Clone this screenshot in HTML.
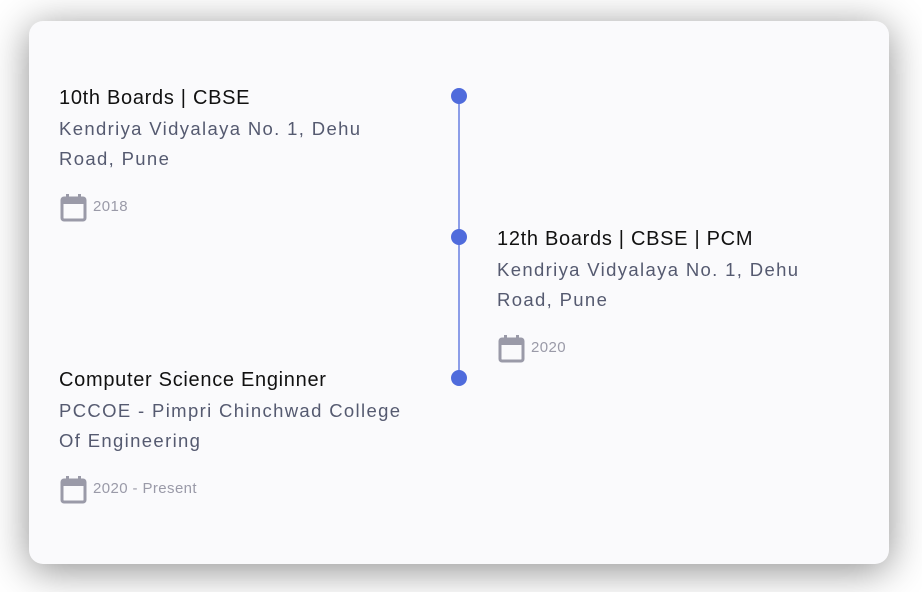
<!DOCTYPE html>
<html><head><style>
html,body{margin:0;padding:0;width:922px;height:592px;overflow:hidden;background:#fff;font-family:"Liberation Sans",sans-serif;}
.card{position:absolute;left:29px;top:21px;width:860px;height:543px;background:#fafafc;border-radius:14px;box-shadow:0 6px 40px rgba(0,0,0,.45);}
.line{position:absolute;left:458px;top:96px;width:2px;height:282px;background:#8c9de8;}
.dot{position:absolute;width:16px;height:16px;border-radius:50%;background:#4f6bdc;left:451px;}
.item{position:absolute;white-space:nowrap;}
.t{font-size:20px;color:#111;letter-spacing:0.7px;line-height:24px;height:24px}
.s{font-size:18.5px;color:#555a70;letter-spacing:1.35px;line-height:30px;margin-top:4px}
.d{position:absolute;top:112px;left:34px;font-size:15px;color:#9a9aa8;letter-spacing:0.4px;}
svg{position:absolute;left:1px;top:107px}
</style></head><body>
<div class="card"></div>
<div class="line"></div>
<div class="dot" style="top:88px"></div>
<div class="dot" style="top:229px"></div>
<div class="dot" style="top:370px"></div>

<div class="item" style="left:59px;top:86px">
<div class="t">10th Boards | CBSE</div>
<div class="s">Kendriya Vidyalaya No. 1, Dehu<br>Road, Pune</div>
<svg width="28" height="30" viewBox="0 0 28 30"><rect x="2" y="5" width="23" height="22" rx="2" fill="none" stroke="#9a9aa8" stroke-width="3"/><rect x="2" y="5" width="23" height="6" fill="#9a9aa8"/><rect x="6" y="1" width="3" height="6" fill="#9a9aa8"/><rect x="18" y="1" width="3" height="6" fill="#9a9aa8"/></svg>
<div class="d">2018</div>
</div>

<div class="item" style="left:497px;top:227px">
<div class="t">12th Boards | CBSE | PCM</div>
<div class="s">Kendriya Vidyalaya No. 1, Dehu<br>Road, Pune</div>
<svg width="28" height="30" viewBox="0 0 28 30"><rect x="2" y="5" width="23" height="22" rx="2" fill="none" stroke="#9a9aa8" stroke-width="3"/><rect x="2" y="5" width="23" height="6" fill="#9a9aa8"/><rect x="6" y="1" width="3" height="6" fill="#9a9aa8"/><rect x="18" y="1" width="3" height="6" fill="#9a9aa8"/></svg>
<div class="d">2020</div>
</div>

<div class="item" style="left:59px;top:368px">
<div class="t">Computer Science Enginner</div>
<div class="s">PCCOE - Pimpri Chinchwad College<br>Of Engineering</div>
<svg width="28" height="30" viewBox="0 0 28 30"><rect x="2" y="5" width="23" height="22" rx="2" fill="none" stroke="#9a9aa8" stroke-width="3"/><rect x="2" y="5" width="23" height="6" fill="#9a9aa8"/><rect x="6" y="1" width="3" height="6" fill="#9a9aa8"/><rect x="18" y="1" width="3" height="6" fill="#9a9aa8"/></svg>
<div class="d">2020 - Present</div>
</div>
</body></html>
